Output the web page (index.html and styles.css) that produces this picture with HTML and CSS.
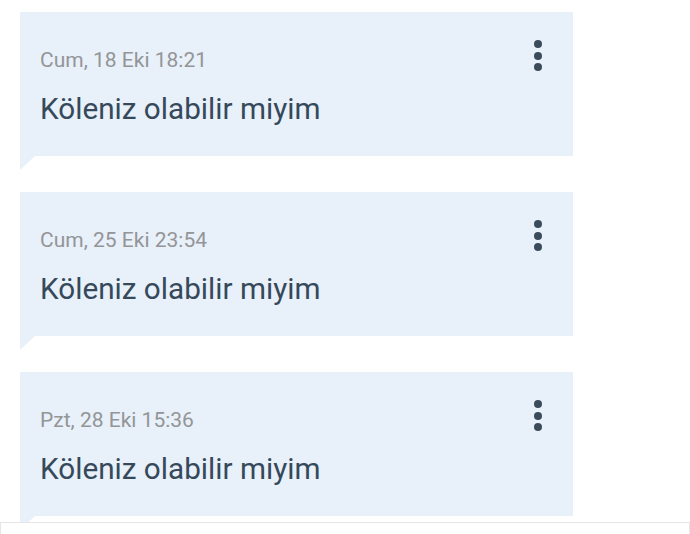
FILE: index.html
```html
<!DOCTYPE html>
<html lang="tr">
<head>
  <meta charset="UTF-8">
  <meta name="viewport" content="width=device-width, initial-scale=1.0">
  <title>Mesajlar</title>
  <link rel="stylesheet" href="styles.css">
</head>
<body>
  <div class="message-list">
    <div class="bubble">
      <div class="bubble-body">
        <div class="date">Cum, 18 Eki 18:21</div>
        <div class="text">Köleniz olabilir miyim</div>
      </div>
      <span class="menu"><i></i><i></i><i></i></span>
    </div>
    <div class="bubble">
      <div class="bubble-body">
        <div class="date">Cum, 25 Eki 23:54</div>
        <div class="text">Köleniz olabilir miyim</div>
      </div>
      <span class="menu"><i></i><i></i><i></i></span>
    </div>
    <div class="bubble">
      <div class="bubble-body">
        <div class="date">Pzt, 28 Eki 15:36</div>
        <div class="text">Köleniz olabilir miyim</div>
      </div>
      <span class="menu"><i></i><i></i><i></i></span>
    </div>
  </div>
  <div class="compose"></div>
</body>
</html>
```

FILE: styles.css
```css
html, body {
  margin: 0;
  height: 534px;
  overflow: hidden;
  background: #ffffff;
  font-family: Roboto, "Noto Sans", sans-serif;
}

.message-list {
  height: 522px;
  overflow: hidden;
  box-sizing: border-box;
  padding: 12px 0 0 20px;
  display: flex;
  flex-direction: column;
  gap: 36px;
}

.bubble {
  position: relative;
  flex-shrink: 0;
  width: 553px;
  height: 144px;
  box-sizing: border-box;
  background: #e8f0fa;
  display: flex;
  justify-content: space-between;
  align-items: flex-start;
  padding: 36px 31px 0 20px;
}

.bubble::after {
  content: "";
  position: absolute;
  left: 0;
  top: 100%;
  border-top: 14px solid #e8f0fa;
  border-right: 15px solid transparent;
}

.date {
  font-size: 21px;
  line-height: 24px;
  color: #939597;
}

.text {
  margin-top: 19px;
  font-size: 29.7px;
  line-height: 36px;
  color: #35495a;
}

.menu {
  display: flex;
  flex-direction: column;
  gap: 3.5px;
  margin-top: -8px;
}

.menu i {
  display: block;
  width: 8px;
  height: 8px;
  border-radius: 50%;
  background: #3a4b5b;
}

.compose {
  height: 60px;
  box-sizing: border-box;
  border: 1px solid #e6e6e6;
  background: #ffffff;
}
```
